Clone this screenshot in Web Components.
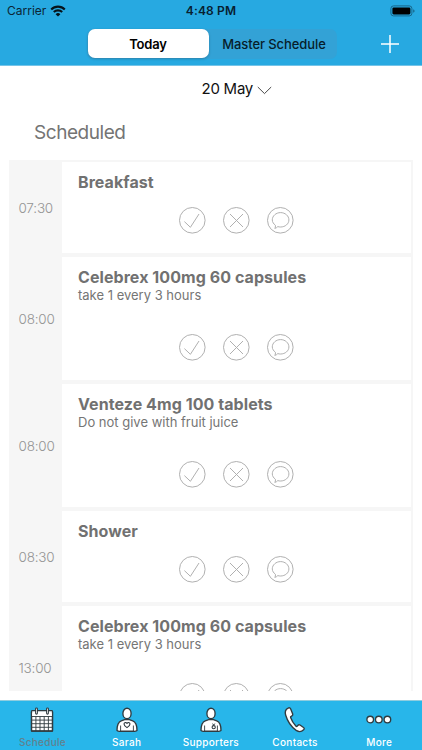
<!DOCTYPE html>
<html lang="en"><head><meta charset="utf-8"><title>Schedule</title>
<style>
html,body{margin:0;height:100%;background:#fff;overflow:hidden}
body{font-family:Inter,"Liberation Sans",sans-serif;color:#111}
</style></head><body>
<care-app></care-app>
<script>
const define=(name,html,setup)=>customElements.define(name,class extends HTMLElement{
  constructor(){super();this.attachShadow({mode:'open'})}
  connectedCallback(){this.shadowRoot.innerHTML=html;if(setup)setup(this,this.shadowRoot)}
});

define('status-bar',`<style>
:host{display:grid;grid-template-columns:1fr auto 1fr;height:22px;align-items:center;padding:0 7px 0 7px;font-size:12px;line-height:22px;color:#0b2535}
.l{display:flex;align-items:center;gap:4px;letter-spacing:0}.t{font-weight:600;letter-spacing:.15px;color:#082030}
.b{justify-self:end;display:flex}svg{display:block}
</style>
<div class="l"><span>Carrier</span><svg width="16" height="12" viewBox="0 0 16 12"><g fill="none" stroke="#06131b" stroke-width="2.1"><path d="M1.2 4.4a9.6 9.6 0 0 1 13.6 0"/><path d="M3.8 7.1a6 6 0 0 1 8.4 0"/></g><path d="M8 11.6 5.6 9.2a3.4 3.4 0 0 1 4.8 0z" fill="#06131b"/></svg></div>
<div class="t">4:48 PM</div>
<div class="b"><svg width="25" height="12" viewBox="0 0 25 12"><rect x=".9" y=".9" width="21" height="10" rx="2.6" fill="none" stroke="#17668a" stroke-width="1"/><rect x="2.4" y="2.4" width="18" height="7" rx="1.3" fill="#000"/><path d="M23.2 4.2q1.4.5 1.4 1.8t-1.4 1.8z" fill="#17668a"/></svg></div>`);

define('segmented-control',`<style>
:host{display:grid;grid-template-columns:122px 128px;width:250px;height:30px;box-sizing:border-box;border-radius:7px;background:#33a2d6;font-size:13px;font-weight:500;color:#071d2a}
div{display:flex;align-items:center;justify-content:center;letter-spacing:-.08px;padding-left:2px}
.on{background:#fff;border-radius:7px;margin:.5px;padding:0;color:#000;box-shadow:0 1px 3px #0003;font-weight:600;letter-spacing:-.15px}
</style><div class="on">Today</div><div>Master Schedule</div>`);

define('app-header',`<style>
:host{display:block;height:65.5px;background:#27a9e1;border-bottom:.5px solid #75c4e8;box-sizing:border-box}
.nav{display:flex;align-items:center;height:43px;padding-left:87px}
svg{display:block;margin-left:44px}
</style><status-bar></status-bar><div class="nav"><segmented-control></segmented-control><svg width="18" height="18" viewBox="0 0 18 18"><path d="M9 0v18M0 9h18" stroke="#fff" stroke-width="1.5"/></svg></div>`);

define('date-picker',`<style>
:host{display:flex;align-items:center;height:46px;padding-left:201.5px;gap:4px;font-size:15px;color:#111}
span{letter-spacing:-.25px}svg{margin-top:3px}
</style><span>20 May</span><svg width="15" height="9" viewBox="0 0 15 9"><path d="M.8 1 7.5 7.6 14.2 1" fill="none" stroke="#333" stroke-width=".9"/></svg>`);

const glyph={
 done:'<path d="M5.4 14.6l6 5.7L20 7"/>',
 skip:'<path d="M7 7l13 13M20 7L7 20"/>',
 note:'<path d="M8.4 18.3C6.7 17 5.3 15.1 5.3 12.900 5.3 8.900 9 5.600 13.600 5.600s8.300 3.300 8.300 7.300-3.700 7.100-8.300 7.100c-1 0-1.900-.1-2.800-.4-.7.8-1.700 1.500-3 1.800.5-.8.900-1.900.6-3.100z"/>'
};
define('round-action','',(el,r)=>{r.innerHTML=`<style>:host{display:block;width:27px;height:27px}svg{display:block}</style>
<svg width="27" height="27" viewBox="0 0 27 27" fill="none" stroke="#acacac" stroke-width=".95"><circle cx="13.3" cy="13.3" r="12.800"/>${glyph[el.getAttribute('kind')]}</svg>`});

define('schedule-item',`<style>
:host{display:grid;grid-template-columns:53.500px 348.500px;height:91px}
:host([tall]){height:123px}
.time{display:flex;align-items:center;padding:0 0 0 10px;font-size:13.500px;font-weight:300;color:#949494;letter-spacing:-.2px}
.card{background:#fff;padding:12px 16px 0;display:flex;flex-direction:column}
.title{font-size:16px;line-height:17px;font-weight:700;color:#717171;letter-spacing:.07px;white-space:nowrap}
.sub{font-size:13px;line-height:18px;color:#757575;letter-spacing:0;white-space:nowrap}
.acts{display:flex;gap:17px;justify-content:center;margin-top:auto;padding-bottom:19.500px}
</style><div class="time"><slot name="time"></slot></div><div class="card"><div class="title"><slot></slot></div><div class="sub"><slot name="note"></slot></div>
<div class="acts"><round-action kind="done"></round-action><round-action kind="skip"></round-action><round-action kind="note"></round-action></div></div>`);

define('schedule-list',`<style>
:host{display:flex;flex-direction:column;gap:4px;box-sizing:border-box;margin-left:8.500px;width:404.500px;height:531px;background:#f6f6f6;padding-top:2px;overflow:hidden}
::slotted(*){flex:none}
</style><slot></slot>`);

const icons={
calendar:'<path d="M2.500 5h21v19h-21z" fill="#fff"/><path d="M2.500 9.500h21M2.500 13.100h21M2.500 16.700h21M2.500 20.300h21M6.900 9.500V24M11 9.500V24M15.200 9.500V24M19.400 9.500V24" stroke-width=".9"/><rect x="2.500" y="3.700" width="21" height="20.500" rx=".8" fill="none" stroke-width="1.200"/><path d="M3.200 4.300h19.600V9H3.200z" fill="#fff" stroke="none"/><path d="M7.500 1.800v4.500M18.500 1.800v4.500" stroke-width="2.800" stroke-linecap="round"/><path d="M7.500 2v4M18.500 2v4" stroke="#ccc" stroke-width="1" stroke-linecap="round"/>',
person:'<path d="M3 23.500C3 17.500 4 15 7.300 13.800c1.700-.6 2.700-.8 3.400-1.300h4.600c.7.500 1.700.7 3.400 1.300C22 15 23 17.500 23 23.500q-1.700 1.200-3.500.7H6.500Q4.600 24.700 3 23.500z"/><path d="M6.600 18.500v5.700M19.400 18.500v5.700" stroke-width=".9"/><ellipse cx="13" cy="6.400" rx="4.100" ry="5.200"/>',
phone:'<path d="M6.100 1.100C3.500 2.400 2.500 4.300 3.700 8.300c1.700 5.700 5.400 11.500 10.500 15.100 2.900 1.900 5.500 1.300 7.400-.6.900-1 .8-1.700-.1-2.300l-3.500-2.500c-.8-.5-1.400-.4-2 .3l-.7.8c-.5.500-1 .4-1.500-.1C11.700 16.800 9.800 13.900 8.600 10.600c-.2-.6-.1-1 .5-1.300l.9-.5c.8-.4 1-.9.7-1.700L8.700 2c-.5-1.200-1.500-1.500-2.600-.9z"/>',
more:'<circle cx="4.200" cy="12.500" r="3.300"/><circle cx="12.800" cy="12.500" r="3.300"/><circle cx="21.400" cy="12.500" r="3.300"/>'
};
icons.heart=icons.person+'<path d="M13 20.600c-2.200-1.500-3-2.400-3-3.600 0-1.600 2.200-2 3-.5.800-1.500 3-1.100 3 .5 0 1.200-.8 2.100-3 3.600z" stroke-width="1.100"/>';
icons.badge=icons.person+'<circle cx="15.700" cy="20.200" r="1.600" stroke-width="1.100"/><path d="M14.600 16.600l1.100 1.600 1.100-1.600" fill="none" stroke-width="1"/>';
define('tab-item','',(el,r)=>{r.innerHTML=`<style>
:host{display:flex;flex-direction:column;align-items:center;color:#fff;font-size:10px;font-weight:500;letter-spacing:.3px;line-height:14px;padding-top:6px}
:host([selected]){color:#62818e}svg{display:block;margin-bottom:2px;overflow:visible}
</style><svg width="26" height="26" viewBox="0 0 26 26" fill="#fff" stroke="#303b40" stroke-width="1.350" stroke-linejoin="round">${icons[el.getAttribute('icon')]}</svg><slot></slot>`});
define('tab-bar',`<style>:host{display:grid;grid-template-columns:repeat(5,84.2px);height:50.500px;box-sizing:border-box;background:#28b6ea;border-top:1px solid #90cddf;margin-top:8.500px;padding-left:.4px}</style><slot></slot>`);

define('care-app',`<style>
:host{display:block;width:422px;height:750px;overflow:hidden;background:#fff}
h2{margin:0;height:48.500px;box-sizing:border-box;padding:9px 0 0 34px;font-size:19px;line-height:24px;font-weight:400;color:#747474;letter-spacing:-.45px}
</style><app-header></app-header><date-picker></date-picker><h2>Scheduled</h2>
<schedule-list>
<schedule-item><span slot="time">07:30</span>Breakfast</schedule-item>
<schedule-item tall><span slot="time">08:00</span>Celebrex 100mg 60 capsules<span slot="note">take 1 every 3 hours</span></schedule-item>
<schedule-item tall><span slot="time">08:00</span>Venteze 4mg 100 tablets<span slot="note">Do not give with fruit juice</span></schedule-item>
<schedule-item><span slot="time">08:30</span>Shower</schedule-item>
<schedule-item tall><span slot="time">13:00</span>Celebrex 100mg 60 capsules<span slot="note">take 1 every 3 hours</span></schedule-item>
</schedule-list>
<tab-bar><tab-item icon="calendar" selected>Schedule</tab-item><tab-item icon="heart">Sarah</tab-item><tab-item icon="badge">Supporters</tab-item><tab-item icon="phone">Contacts</tab-item><tab-item icon="more">More</tab-item></tab-bar>`);
</script></body></html>
